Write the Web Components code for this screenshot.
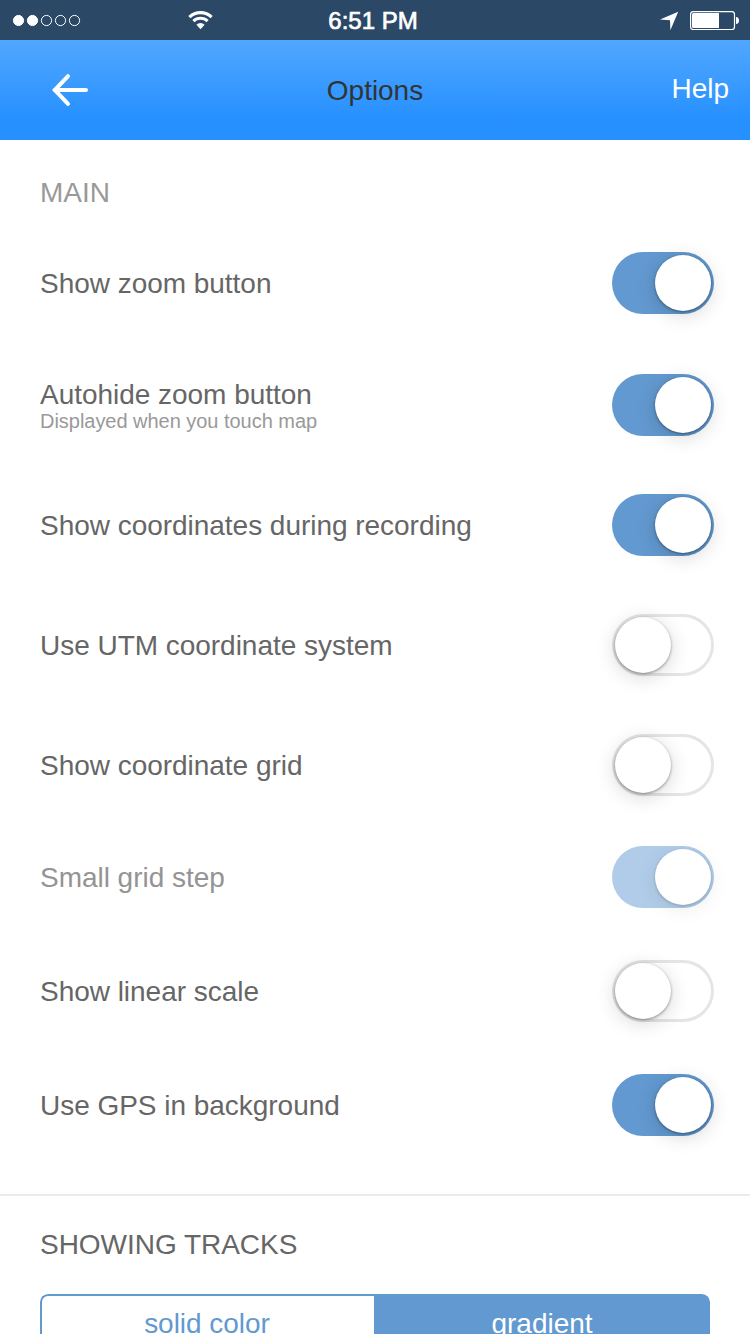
<!DOCTYPE html>
<html lang="en">
<head>
<meta charset="utf-8">
<title>Options</title>
<style>
    html, body {
        margin: 0;
        height: 1334px;
        overflow: hidden;
        background: #fff;
    }
    body {
        font: 28px/32px "Liberation Sans", Arial, sans-serif;
        letter-spacing: -0.03px;
        color: #666;
    }
</style>
</head>
<body>
<options-page>
    <status-bar slot="header" signal="2">6:51 PM</status-bar>
    <nav-bar slot="header">Options<span slot="action">Help</span></nav-bar>

    <options-section muted>
        <span slot="title">MAIN</span>
        <option-row style="--gap:43px" checked>Show zoom button</option-row>
        <option-row style="--gap:60px" checked>Autohide zoom button<span slot="hint">Displayed when you touch map</span></option-row>
        <option-row checked>Show coordinates during recording</option-row>
        <option-row>Use UTM coordinate system</option-row>
        <option-row>Show coordinate grid</option-row>
        <option-row style="--gap:50px" checked disabled>Small grid step</option-row>
        <option-row style="--gap:52px">Show linear scale</option-row>
        <option-row style="--gap:52px" checked>Use GPS in background</option-row>
    </options-section>

    <options-section>
        <span slot="title">SHOWING TRACKS</span>
        <segment-control>
            <segment-item>solid color</segment-item>
            <segment-item selected>gradient</segment-item>
        </segment-control>
    </options-section>
</options-page>

<script>
class BaseElement extends HTMLElement {
    constructor() {
        super()
        this.attachShadow({ mode: 'open' })
        const tmpl = document.createElement('template');
        tmpl.innerHTML = this.constructor.html;
        this.shadowRoot.appendChild(tmpl.content.cloneNode(true))
    }

    $(id) { return this.shadowRoot.getElementById(id) }
}

class OptionsPage extends BaseElement {
    static html = `
        <style>
            :host{
                display:flex;
                flex-direction:column;
                width:750px;
                height:1334px;
                overflow:hidden;
            }
            header, main{
                flex:none;
            }
        </style>
        <header><slot name="header"></slot></header>
        <main><slot></slot></main>
    `
}

class StatusBar extends BaseElement {
    static html = `
        <style>
            :host{
                display:grid;
                grid-template-columns:1fr auto 1fr;
                align-items:center;
                height:40px;
                background:#2b4866;
                color:#fff;
                font-size:24px;
            }
            svg{
                display:block;
            }
            .left, .right{
                display:flex;
                height:40px;
            }
            .left{
                gap:107px;
                padding-left:12px;
            }
            .right{
                justify-content:flex-end;
                gap:10px;
                padding-right:10px;
            }
            .time{
                -webkit-text-stroke:0.7px #fff;
                letter-spacing:0;
                padding:2px 4px 0 0;
            }
        </style>
        <div class="left">
            <svg id="signal" width="69" height="40" fill="none" stroke="#fff"></svg>
            <svg width="25" height="40" viewBox="188 0 25 40" fill="none" stroke="#fff">
                <path d="M189.4 17.2A15.9 15.9 0 0 1 211.6 17.2" stroke-width="3.2"/>
                <path d="M193.4 21.2A10.3 10.3 0 0 1 207.6 21.2" stroke-width="3"/>
                <path d="M196.4 24.8A5.8 5.8 0 0 1 204.6 24.8L200.5 29.2Z" fill="#fff" stroke="none"/>
            </svg>
        </div>
        <div class="time"><slot></slot></div>
        <div class="right">
            <svg width="20" height="40" viewBox="660 0 20 40">
                <path d="M660 19.6L678.2 11.8L670.4 30.2L670 20.2Z" fill="#fff"/>
            </svg>
            <svg width="50" height="40" viewBox="690 0 50 40">
                <rect x="690.6" y="11.6" width="43.9" height="17.9" rx="2.8" fill="none" stroke="#fff" stroke-width="1.2"/>
                <path d="M693.5 13H719V28H693.5Q692 28 692 26.5V14.5Q692 13 693.5 13Z" fill="#fff"/>
                <path d="M736 17Q739 17.4 739 20.5T736 24Z" fill="#fff"/>
            </svg>
        </div>
    `

    connectedCallback() {
        const signal = Number(this.getAttribute('signal'));
        let dots = '';
        for (let i = 0; i < 5; i++)
            dots += `<circle cx="${6.5 + i * 14}" cy="20.5" r="5.1" fill="${i < signal ? '#fff' : 'none'}"/>`;
        this.$('signal').innerHTML = dots;
    }
}

class NavBar extends BaseElement {
    static html = `
        <style>
            :host{
                display:grid;
                grid-template-columns:1fr auto 1fr;
                align-items:center;
                height:100px;
                background:linear-gradient(#51a7ff, #2690ff 80%);
                color:#333;
            }
            svg{
                display:block;
                margin-left:50px;
            }
            .title{
                padding-top:2px;
            }
            .action{
                padding:0 21px 2px 0;
                text-align:right;
                color:#fff;
            }
        </style>
        <svg width="40" height="40" viewBox="50 70 40 40" fill="none" stroke="#fff" stroke-width="4">
            <path d="M55 90H86" stroke-linecap="round"/>
            <path d="M68 76.2L54.8 90L68 103.8" stroke-linecap="round"/>
        </svg>
        <div class="title"><slot></slot></div>
        <div class="action"><slot name="action"></slot></div>
    `
}

class OptionsSection extends BaseElement {
    static html = `
        <style>
            :host{
                display:block;
                padding:37px 40px 58px;
            }
            :host(:not(:last-child)){
                border-bottom:2px solid #ebebeb;
            }
            :host([muted]) .title{
                color:#999;
            }
            .title{
                height:32px;
            }
            :host(:last-child){
                padding-top:33px;
            }
        </style>
        <div class="title"><slot name="title"></slot></div>
        <slot></slot>
    `
}

class OptionRow extends BaseElement {
    static html = `
        <style>
            :host{
                display:flex;
                align-items:center;
                justify-content:space-between;
                height:62px;
                margin:var(--gap, 58px) -4px 0 0;
            }
            .label{
                display:flex;
                flex-direction:column;
                padding-top:2px;
            }
            ::slotted([slot="hint"]){
                margin:-1px 0 1px;
                font-size:20px;
                line-height:22px;
                color:#999;
            }
            :host([disabled]) .label{
                color:#949494;
            }
        </style>
        <div class="label"><div><slot></slot></div><slot name="hint"></slot></div>
        <toggle-switch id="toggle"></toggle-switch>
    `

    connectedCallback() {
        this.$('toggle').toggleAttribute('checked', this.hasAttribute('checked'));
        this.$('toggle').toggleAttribute('disabled', this.hasAttribute('disabled'));
    }
}

class ToggleSwitch extends BaseElement {
    static html = `
        <style>
            :host{
                display:flex;
                flex:none;
                box-sizing:border-box;
                width:102px;
                height:62px;
                padding:3px;
                border-radius:31px;
                box-shadow:inset 0 0 0 3px #e5e5e5;
            }
            :host([checked]){
                justify-content:flex-end;
                background:#6299d0;
                box-shadow:none;
            }
            :host([checked][disabled]){
                background:#b0cce8;
            }
            .thumb{
                width:56px;
                height:56px;
                border-radius:50%;
                background:#fff;
                box-shadow:0 1px 3px rgba(0,0,0,.4), 0 4px 20px rgba(0,0,0,.16);
            }
            :host([disabled]) .thumb{
                box-shadow:0 1px 3px rgba(0,0,0,.2), 0 4px 20px rgba(0,0,0,.08);
            }
        </style>
        <div class="thumb"></div>
    `
}

class SegmentControl extends BaseElement {
    static html = `
        <style>
            :host{
                display:grid;
                grid-template-columns:334px 1fr;
                height:60px;
                margin-top:33px;
                border-radius:8px;
                overflow:hidden;
            }
        </style>
        <slot></slot>
    `
}

class SegmentItem extends BaseElement {
    static html = `
        <style>
            :host{
                display:flex;
                align-items:center;
                justify-content:center;
                box-sizing:border-box;
                border:2px solid #6299d0;
                border-right:none;
                border-radius:8px 0 0 8px;
                padding-right:2px;
                color:#6299d0;
            }
            :host([selected]){
                border:none;
                border-radius:0 8px 8px 0;
                padding-right:0;
                background:#6299d0;
                color:#fff;
            }
        </style>
        <slot></slot>
    `
}

window.customElements.define('toggle-switch', ToggleSwitch);
window.customElements.define('option-row', OptionRow);
window.customElements.define('segment-item', SegmentItem);
window.customElements.define('segment-control', SegmentControl);
window.customElements.define('options-section', OptionsSection);
window.customElements.define('nav-bar', NavBar);
window.customElements.define('status-bar', StatusBar);
window.customElements.define('options-page', OptionsPage);
</script>
</body>
</html>
